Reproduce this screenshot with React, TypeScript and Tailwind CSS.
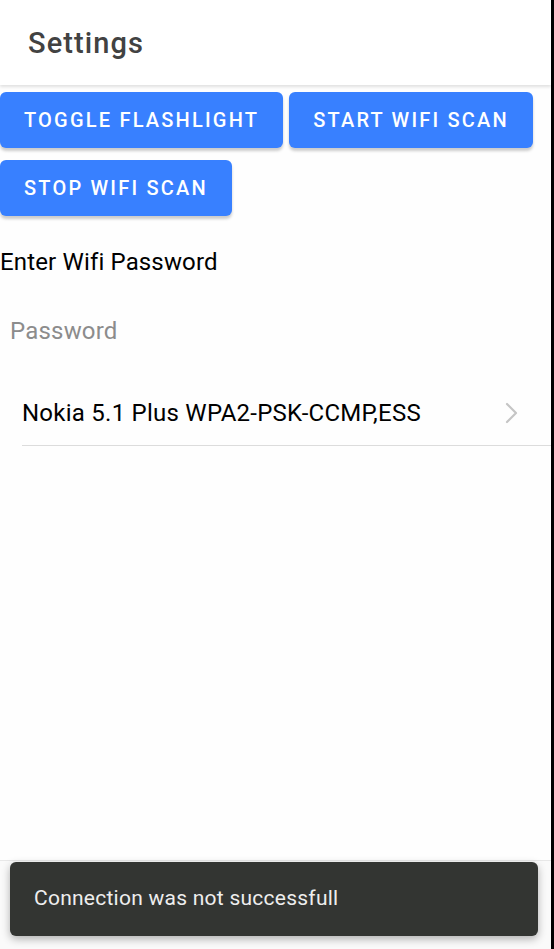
import React from "react";

function Chevron() {
  return (
    <svg width="14" height="22" viewBox="0 0 14 22" fill="none">
      <path d="M2 2 L11 11 L2 20" stroke="#c5c5c5" strokeWidth="2.2" strokeLinecap="round" strokeLinejoin="round" />
    </svg>
  );
}

export default function App() {
  const font = { fontFamily: "Roboto, 'Noto Sans', sans-serif" };
  return (
    <div className="flex h-[949px] w-[554px] overflow-hidden bg-black" style={font}>
      <div className="relative flex h-full w-[551px] flex-col bg-[#fefefe]">
        <header className="flex h-[85px] shrink-0 items-center bg-white pl-[28px] pt-[2px] shadow-[0_2px_3px_rgba(0,0,0,0.12)]">
          <h1 className="text-[29px] font-medium tracking-[1.1px] text-[#424242]">Settings</h1>
        </header>
        <div className="flex flex-wrap gap-x-[6px] gap-y-[12px] pt-[7px] pr-[10px]">
          {["Toggle Flashlight", "Start Wifi Scan", "Stop Wifi Scan"].map((t) => (
            <button
              key={t}
              className="flex h-[56px] items-center rounded-[6px] bg-[#3880ff] px-[24px] text-[20px] font-medium uppercase tracking-[0.11em] text-white shadow-[0_3px_3px_rgba(0,0,0,0.2)]"
            >
              {t}
            </button>
          ))}
        </div>
        <div className="mt-[31px] text-[24px] leading-[30px] tracking-[0.15px] text-black">Enter Wifi Password</div>
        <div className="mt-[39px] pl-[10px] text-[24px] leading-[30px] tracking-[0.2px] text-[#8c8c8c]">Password</div>
        <div className="mt-[33px] pl-[22px]">
          <div className="flex h-[67px] items-center justify-between border-b border-[#dcdcdc] pr-[32px] pt-[2px]">
            <span className="text-[24px] tracking-[0.25px] text-black">Nokia 5.1 Plus WPA2-PSK-CCMP,ESS</span>
            <Chevron />
          </div>
        </div>
        <div className="flex-1" />
        <div className="h-[89px] border-t border-[#e8e8e8] bg-[#fafafa]" />
        <div className="absolute left-[10px] top-[862px] flex h-[74px] w-[528px] items-center rounded-[6px] bg-[#333532] pl-[24px] shadow-[0_3px_8px_rgba(0,0,0,0.3)]">
          <span className="text-[21px] tracking-[0.25px] text-[#eeeeee]">Connection was not successfull</span>
        </div>
      </div>
      <div className="w-[3px] bg-black" />
    </div>
  );
}
